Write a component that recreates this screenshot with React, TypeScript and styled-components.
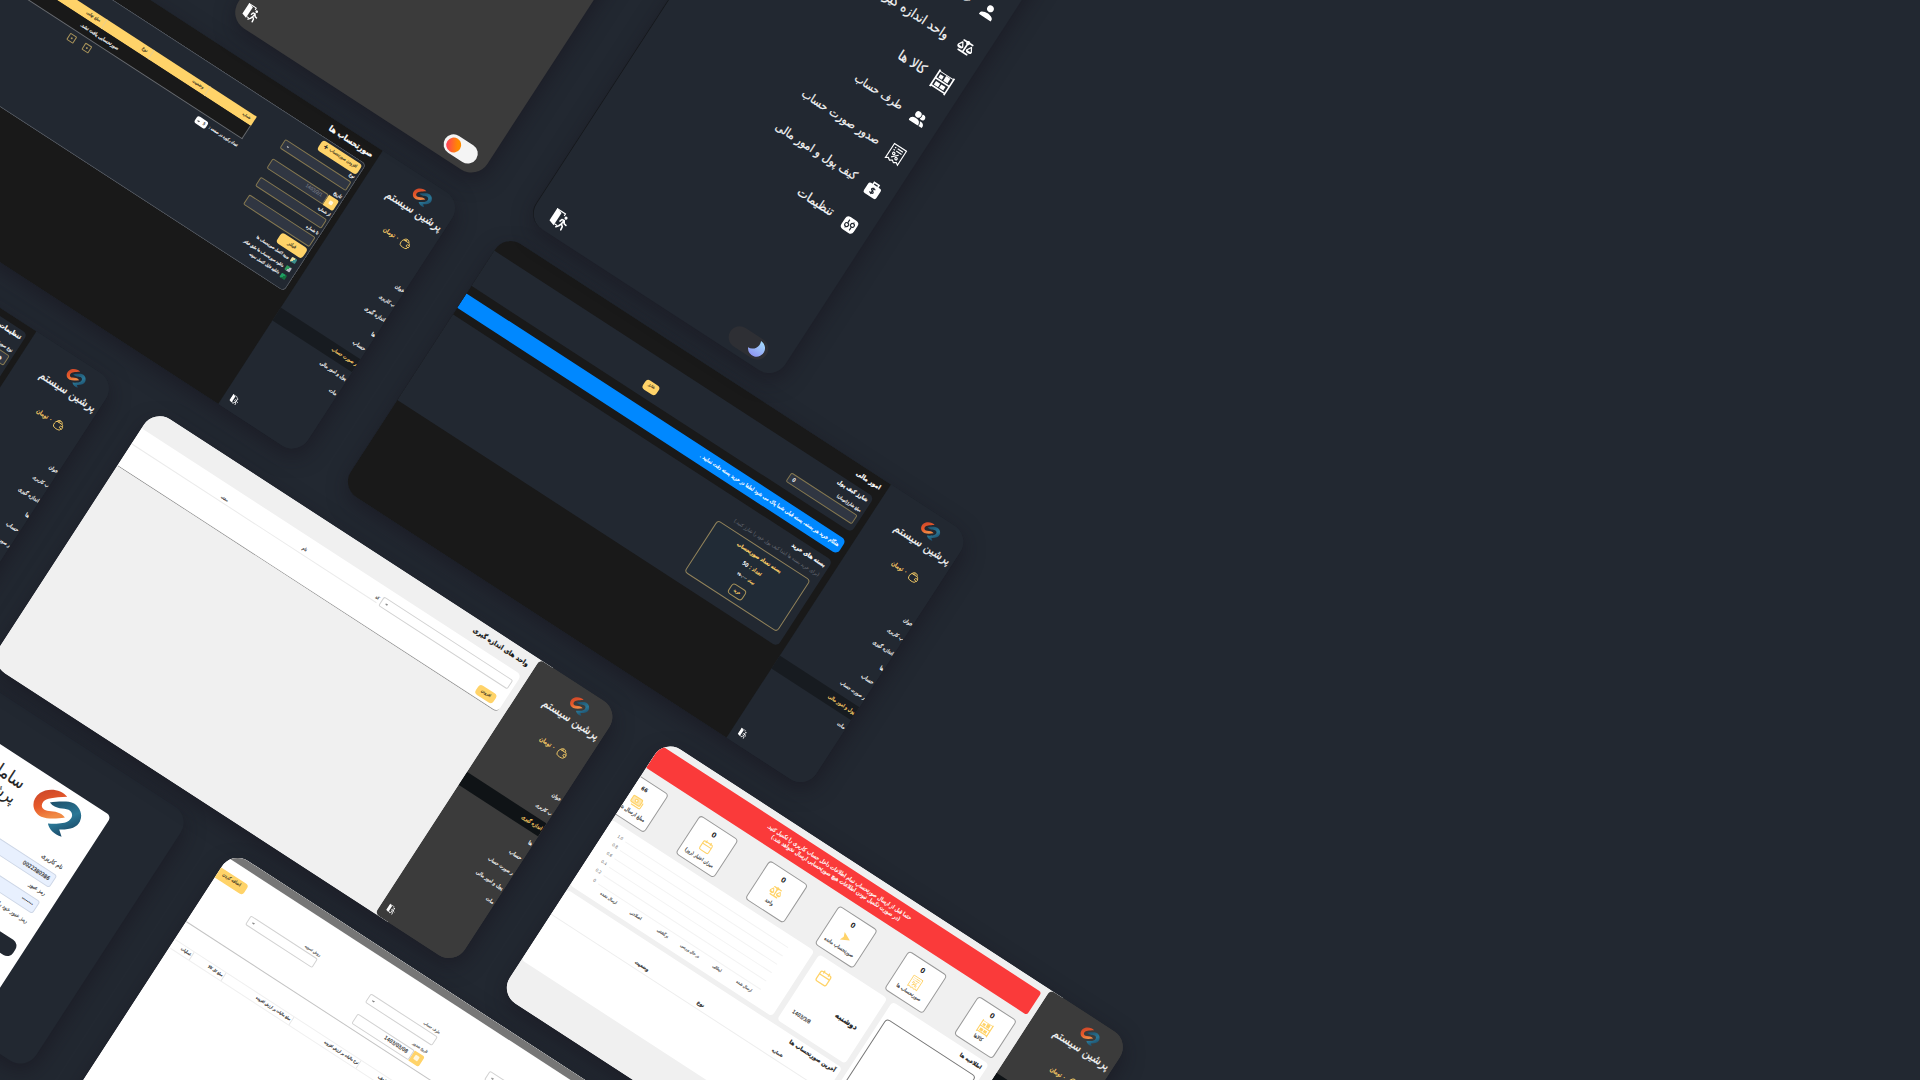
import React from "react";
import styled, { createGlobalStyle, css } from "styled-components";
import { FaScaleBalanced, FaUserGroup } from "react-icons/fa6";
import { MdPerson } from "react-icons/md";

const FACE = `"DejaVu Sans Condensed", "DejaVu Sans"`;
const FONT = `${FACE}, "Noto Sans", sans-serif`;
const c = {
  bg: "#222831",
  black: "#191919",
  gold: "#ffd369",
  line: "#a8935a",
  field: "#303642",
  grey: "#3b3b3b",
  light: "#f0f0f0",
};
const LIGHT_SHOT = `linear-gradient(to left, ${c.grey} 80px, ${c.light} 0)`;

const Global = createGlobalStyle`
  html, body { margin: 0; padding: 0; background: ${c.bg}; }
  * { box-sizing: border-box; }
`;

/* ---------- text fitted to a known width ---------- */
const pen = document.createElement("canvas").getContext("2d")!;
const fitSize = (text: string, width: number, weight: number) => {
  pen.font = `${weight} 100px ${FACE}`;
  return (width * 100) / pen.measureText(text).width;
};

const LabelText = styled.span<{ $c: string; $w: number; $s: number }>`
  color: ${(p) => p.$c};
  font-weight: ${(p) => p.$w};
  line-height: 1;
  white-space: nowrap;
  flex: none;
  direction: rtl;
  -webkit-text-stroke: ${(p) => p.$s}px currentColor;
`;

type LabelProps = { w: number; color?: string; bold?: boolean; stroke?: number; children: string };
const Label = ({ w, color = "#f4f4f4", bold, stroke = 0.2, children }: LabelProps) => {
  const weight = bold ? 700 : 400;
  return (
    <LabelText $c={color} $w={weight} $s={stroke} style={{ fontSize: fitSize(children, w, weight) }}>
      {children}
    </LabelText>
  );
};

/* ---------- canvas ---------- */
const Stage = styled.main`
  position: relative;
  width: 1920px;
  height: 1080px;
  overflow: hidden;
  background: ${c.bg};
  font-family: ${FONT};
`;
const Plane = styled.div`
  position: absolute;
  left: 0;
  top: 0;
  width: 0;
  height: 0;
  transform: rotate(33deg);
  transform-origin: 0 0;
`;
const Shot = styled.section<{ $x: number; $y: number; $w?: number; $h?: number; $bg?: string }>`
  position: absolute;
  left: ${(p) => p.$x}px;
  top: ${(p) => p.$y}px;
  width: ${(p) => p.$w ?? 555}px;
  height: ${(p) => p.$h ?? 302.5}px;
  background: ${(p) => p.$bg ?? c.bg};
  border-radius: 19px;
  overflow: hidden;
  display: flex;
  direction: rtl;
  box-shadow: 4px 6px 20px rgba(22, 18, 28, 0.5);
`;

/* ---------- building blocks ---------- */
const Row = styled.div<{ $h?: number; $mt?: number; $pr?: number; $gap?: number }>`
  display: flex;
  align-items: center;
  flex: none;
  height: ${(p) => (p.$h ? `${p.$h}px` : "auto")};
  margin-top: ${(p) => p.$mt ?? 0}px;
  padding-right: ${(p) => p.$pr ?? 0}px;
  gap: ${(p) => p.$gap ?? 0}px;
`;
const Body = styled.div<{ $bg: string; $pr?: number }>`
  flex: 1;
  min-width: 0;
  overflow: hidden;
  display: flex;
  flex-direction: column;
  background: ${(p) => p.$bg};
  padding-right: ${(p) => p.$pr ?? 7}px;
`;
const Panel = styled.div<{ $h: number; $mt?: number; $bg?: string; $line?: string; $pr?: number }>`
  flex: none;
  height: ${(p) => p.$h}px;
  margin-top: ${(p) => p.$mt ?? 0}px;
  background: ${(p) => p.$bg ?? c.bg};
  border-radius: 0 5px 5px 0;
  padding-right: ${(p) => p.$pr ?? 4}px;
  ${(p) => p.$line && css`border: 1px solid ${p.$line}; border-left: 0;`}
`;
const Button = styled.div<{ $w: number; $h: number; $outline?: boolean; $mt?: number; $mr?: number }>`
  flex: none;
  width: ${(p) => p.$w}px;
  height: ${(p) => p.$h}px;
  margin: ${(p) => p.$mt ?? 0}px ${(p) => p.$mr ?? 0}px 0 0;
  border-radius: 3.5px;
  display: flex;
  align-items: center;
  justify-content: center;
  gap: 2px;
  background: ${(p) => (p.$outline ? "transparent" : c.gold)};
  border: ${(p) => (p.$outline ? `1px solid ${c.line}` : "0")};
`;
const Input = styled.div<{ $w: number; $h: number; $light?: boolean }>`
  flex: none;
  width: ${(p) => p.$w}px;
  height: ${(p) => p.$h}px;
  border: 1px solid ${(p) => (p.$light ? "#d2d2d2" : "#857850")};
  border-radius: 2px;
  background: ${(p) => (p.$light ? "#ffffff" : c.field)};
  display: flex;
  align-items: center;
  justify-content: flex-end;
  padding-left: 4px;
`;
const StartInput = styled(Input)`
  justify-content: flex-start;
  padding-right: 4px;
`;
const DateTag = styled.div<{ $s: number }>`
  flex: none;
  width: ${(p) => p.$s}px;
  height: ${(p) => p.$s}px;
  border-radius: 0 2px 2px 0;
  background: ${c.gold};
  display: flex;
  align-items: center;
  justify-content: center;
  &::after {
    content: "";
    width: 4.5px;
    height: 4.5px;
    border-radius: 1px;
    background: #fff6dc;
  }
`;
const Chevron = ({ color }: { color: string }) => (
  <svg width="3" height="3" viewBox="0 0 8 8" fill="none" stroke={color} strokeWidth="2">
    <path d="M1 2.5 4 5.5 7 2.5" />
  </svg>
);

/* ---------- drawings ---------- */
const Mark = styled.svg`
  flex: none;
  transform: rotate(-33deg);
`;
const BrandMark = ({ size, id }: { size: number; id: string }) => (
  <Mark width={size} height={size} viewBox="95 265 150 150">
    <defs>
      <linearGradient id={`${id}o`} x1="0" y1="0" x2="0.3" y2="1">
        <stop offset="0" stopColor="#c8452a" />
        <stop offset="0.6" stopColor="#e85a2a" />
        <stop offset="1" stopColor="#f08a45" />
      </linearGradient>
      <linearGradient id={`${id}b`} x1="0" y1="0" x2="0.4" y2="1">
        <stop offset="0" stopColor="#1d4c66" />
        <stop offset="0.6" stopColor="#2a7796" />
        <stop offset="1" stopColor="#1b4a68" />
      </linearGradient>
    </defs>
    <path
      fill={`url(#${id}o)`}
      d="M200 290C182 267 142 262 118 279C90 299 93 336 122 350C142 358 170 356 193 352C182 337 162 334 145 333C124 331 119 317 128 305C138 294 158 292 200 290Z"
    />
    <path
      fill={`url(#${id}b)`}
      d="M148 307C165 304 190 303 205 305C236 310 249 342 238 364C229 382 208 389 176 388L183 410C160 402 146 388 142 370C165 372 192 371 205 362C219 351 217 336 204 329C190 322 166 330 148 307Z"
    />
  </Mark>
);
const ExitIcon = ({ size }: { size: number }) => (
  <svg width={size} height={size} viewBox="0 0 24 24">
    <path fill="#fff" d="M1 1 9 3.5V22.5L1 20Z" />
    <path fill="none" stroke="#fff" strokeWidth="1.5" d="M1 1.8H14V5M9 20.3H13" />
    <circle cx="17.5" cy="6" r="2" fill="#fff" />
    <path
      fill="none"
      stroke="#fff"
      strokeWidth="2.1"
      strokeLinejoin="round"
      strokeLinecap="round"
      d="M13 13.5 14 10.5 17.3 10 16.5 15.5 19.5 18 20 22.5M16.3 16 15 19.5 12.5 22.5M18 11 19.5 13.5 22.5 14"
    />
  </svg>
);
const ShelfIcon = ({ size, color = "#fff" }: { size: number; color?: string }) => (
  <svg width={size} height={size} viewBox="0 0 24 24" fill={color}>
    <path d="M1 0h2v24H1zM21 0h2v24h-2zM2 10.5h20v2H2zM2 20.5h20v2H2zM5 5h5v4.500H5zM12 3h6v6.500H12zM5 14.500h6v5H5zM12.500 14.500h6v5h-6zM2 1.500h20v1H2z" />
  </svg>
);
const InvoiceIcon = ({ size, color = "#fff" }: { size: number; color?: string }) => (
  <svg width={size} height={size} viewBox="0 0 24 24" fill="none" stroke={color} strokeWidth="1.5">
    <path d="M3 1.5H21V22.5L18 20.5 15 22.5 12 20.5 9 22.5 6 20.5 3 22.5Z" />
    <path d="M6 5H8M10 5H18M6 8.3H8M10 8.3H18M15.5 11 8.5 18" />
    <circle cx="9" cy="12.5" r="1.5" />
    <circle cx="15" cy="16.5" r="1.5" />
  </svg>
);
const BagIcon = ({ size }: { size: number }) => (
  <svg width={size} height={size} viewBox="0 0 24 24">
    <path fill="none" stroke="#fff" strokeWidth="2.2" d="M8 7V2.5H16V7" />
    <rect x="1.5" y="5.5" width="21" height="17" rx="3" fill="#fff" />
    <path
      fill="none"
      stroke={c.bg}
      strokeWidth="1.7"
      d="M14.8 11.3C14 10 9.6 10 9.6 12.2 9.6 14.5 14.6 13.6 14.6 15.9 14.6 18.2 10 18.2 9.2 16.6M12.1 9V19.2"
    />
  </svg>
);
const TuneIcon = ({ size }: { size: number }) => (
  <svg width={size} height={size} viewBox="0 0 24 24">
    <rect x="1" y="1" width="22" height="22" rx="6" fill="#fff" />
    <g fill="none" stroke={c.bg} strokeWidth="1.7">
      <circle cx="8" cy="13.8" r="2.9" />
      <circle cx="16" cy="10.2" r="2.9" />
      <path d="M8 5V10.8M8 16.8V19M16 5V7.2M16 13.2V19" />
    </g>
  </svg>
);
const PurseIcon = () => (
  <svg width="11" height="11" viewBox="0 0 24 24" fill="none" stroke={c.gold} strokeWidth="1.8">
    <path d="M5 7C2 9 1.5 17 4 20C6.500 22.500 17 22.500 19.500 20.500C21 19 21.500 17 21.500 16M21.500 12C21.500 9 20 7 17.500 7H5C6 4 9 2 12 2C15 2 17 4 18 7" />
    <path d="M23 11.500H18.500C15.500 11.500 15.500 16.500 18.500 16.500H23ZM8 7 12 3.500" />
  </svg>
);
const CalendarIcon = ({ size }: { size: number }) => (
  <svg width={size} height={size} viewBox="0 0 24 24" fill="none" stroke={c.gold} strokeWidth="2">
    <rect x="2.500" y="4" width="19" height="18" rx="3" />
    <path d="M2.500 10H21.500M7.500 1V6.500M16.500 1V6.500" />
  </svg>
);
const CashIcon = ({ size }: { size: number }) => (
  <svg width={size} height={size} viewBox="0 0 24 24" fill="none" stroke={c.gold} strokeWidth="2">
    <rect x="1.500" y="4" width="18" height="12" rx="2" fill="#ffe7ae" />
    <circle cx="10.500" cy="10" r="2.500" fill="#fff" />
    <path d="M5 19.500H20C22 19.500 22.500 18.500 22.500 17V8" />
  </svg>
);
const SendIcon = ({ size }: { size: number }) => (
  <svg width={size} height={size} viewBox="0 0 24 24" fill={c.gold}>
    <path d="M4 3 22 12 4 21 7.500 12Z" />
  </svg>
);

/* ---------- sidebar ---------- */
const Side = styled.aside<{ $bg: string }>`
  flex: none;
  width: 95px;
  background: ${(p) => p.$bg};
  border-radius: 5px 0 0 5px;
  direction: ltr;
  display: flex;
  flex-direction: column;
  overflow: hidden;
`;
const Brand = styled.div`
  width: 66px;
  height: 35px;
  margin: 8px 0 0 26px;
  display: flex;
  flex-direction: column;
  align-items: center;
  gap: 0;
`;
const Wallet = styled.div`
  display: flex;
  align-items: center;
  gap: 3px;
  height: 12px;
  margin: 17px 0 26.200px 43.500px;
`;
const MenuItem = styled.div<{ $x: number; $on: boolean; $onBg: string }>`
  height: 17.600px;
  flex: none;
  display: flex;
  align-items: center;
  padding-left: ${(p) => p.$x}px;
  background: linear-gradient(${(p) => (p.$on ? p.$onBg : "transparent")} 0 0) center / 100% 15.500px no-repeat;
`;
const SideExit = styled.div`
  margin: 47px 0 0 7px;
  height: 9px;
  line-height: 0;
`;
const MENU_TAILS: [string, number, number][] = [
  ["خوان", 84.5, 10],
  ["ب کاربری", 76.5, 18],
  ["اندازه گیری", 71, 23.5],
  ["ها", 90.5, 4],
  ["حساب", 79.5, 14],
  ["ر صورت حساب", 65.5, 29],
  ["پول و امور مالی", 63, 31],
  ["مات", 85.5, 8.5],
];

const Sidebar = ({ active, dark, id }: { active: number; dark?: boolean; id: string }) => (
  <Side $bg={dark ? c.bg : c.grey}>
    <Brand>
      <BrandMark size={20} id={id} />
      <Label w={65}>پرشین سیستم</Label>
    </Brand>
    <Wallet>
      <Label w={18} color={c.gold}>۰ تومان</Label>
      <PurseIcon />
    </Wallet>
    {MENU_TAILS.map(([name, x, w], i) => (
      <MenuItem key={name} $x={x} $on={i === active} $onBg={dark ? "#171b20" : "#0f1316"}>
        <Label w={w} color={i === active ? c.gold : "#f4f4f4"}>{name}</Label>
      </MenuItem>
    ))}
    <SideExit>
      <ExitIcon size={9} />
    </SideExit>
  </Side>
);

/* ---------- invoices ---------- */
const Split = styled.div`
  display: flex;
  align-items: flex-start;
`;
const Filters = styled.div`
  width: 79px;
  flex: none;
  display: flex;
  flex-direction: column;
  align-items: flex-start;
`;
const Results = styled.div`
  width: 350px;
  flex: none;
  margin: 19.500px 36.500px 0 0;
`;
const HeadRow = styled.div`
  display: flex;
  height: 11px;
  background: ${c.gold};
`;
const HeadCell = styled.div<{ $w: number }>`
  width: ${(p) => p.$w}px;
  display: flex;
  align-items: center;
  padding-right: 4px;
  border-left: 1px solid #e8cf8e;
`;
const EmptyRow = styled.div`
  height: 15.500px;
  display: flex;
  align-items: center;
  justify-content: center;
  background: ${c.black};
  border: 1px solid #666a70;
  border-top: 0;
`;
const PageSelect = styled.div`
  width: 12.500px;
  height: 8px;
  margin-right: 3px;
  border-radius: 2.500px;
  background: #fff;
  display: flex;
  align-items: center;
  justify-content: space-around;
`;
const Pager = styled.div`
  display: flex;
  gap: 10px;
  margin-right: 126px;
`;
const PagerBox = styled.div`
  width: 8px;
  height: 8px;
  border: 1px solid ${c.line};
  border-radius: 1px;
  display: flex;
  align-items: center;
  justify-content: center;
  &::after {
    content: "";
    width: 2.500px;
    height: 2.500px;
    border-radius: 50%;
    background: ${c.line};
  }
`;
const Sheet = styled.i<{ $a: string; $b: string }>`
  width: 6px;
  height: 5.500px;
  border-radius: 1px;
  background: linear-gradient(120deg, ${(p) => p.$a} 50%, ${(p) => p.$b} 50%);
`;

const InvoicesShot = () => (
  <Shot $x={-57} $y={-82.5}>
    <Sidebar active={5} dark id="a" />
    <Body $bg={c.black} $pr={6}>
      <Row $h={20} $pr={-1}>
        <Label w={51} bold color="#fff">صورتحساب ها</Label>
      </Row>
      <Panel $h={152} $line="#565b63" $pr={2}>
        <Split>
          <Filters>
            <Button $w={47} $h={12} $mt={2} $mr={0}>
              <Label w={32} color="#4d4328">افزودن صورتحساب</Label>
              <Label w={5} bold color="#222">+</Label>
            </Button>
            <Row $h={8}><Label w={6}>نوع</Label></Row>
            <Row><Input $w={79} $h={11.5}><Chevron color="#ccc" /></Input></Row>
            <Row $h={8} $mt={3.5}><Label w={9}>تاریخ</Label></Row>
            <Row>
              <DateTag $s={12.5} />
              <StartInput $w={66.5} $h={12}><Label w={19} color="#6b6f7a">1403/2/1</Label></StartInput>
            </Row>
            <Row $h={8} $mt={1.5}><Label w={14}>از شماره</Label></Row>
            <Row><Input $w={79} $h={11.5} /></Row>
            <Row $h={8} $mt={2}><Label w={14}>تا شماره</Label></Row>
            <Row><Input $w={79} $h={11.5} /></Row>
            <Button $w={31} $h={12} $mt={2.5}>
              <Label w={9} color="#4d4328">فیلتر</Label>
            </Button>
            <Row $h={9} $mt={1} $gap={2.5} $pr={3}>
              <Sheet $a="#e9dfa0" $b="#3c8f8a" />
              <Label w={38}>ورود اکسل صورتحساب ها</Label>
            </Row>
            <Row $h={9} $mt={1} $gap={2.5} $pr={3}>
              <Sheet $a="#2f9a5c" $b="#b9b9c4" />
              <Label w={47}>دانلود صورتحساب ها طبق فیلتر</Label>
            </Row>
            <Row $h={9} $gap={2.5} $pr={3}>
              <Sheet $a="#1f9e63" $b="#14713f" />
              <Label w={35}>دانلود فایل اکسل نمونه</Label>
            </Row>
          </Filters>
          <Results>
            <HeadRow>
              <HeadCell $w={56}><Label w={9} color="#4d4328">شماره</Label></HeadCell>
              <HeadCell $w={67}><Label w={13} color="#4d4328">وضعیت</Label></HeadCell>
              <HeadCell $w={56}><Label w={6} color="#4d4328">نوع</Label></HeadCell>
              <HeadCell $w={171}><Label w={16} color="#4d4328">مبلغ نهایی</Label></HeadCell>
            </HeadRow>
            <EmptyRow><Label w={45}>صورتحسابی یافت نشد.</Label></EmptyRow>
            <Row $h={17}>
              <Label w={34}>تعداد رکورد در صفحه :</Label>
              <PageSelect><Label w={2.2} color="#333">5</Label><Chevron color="#333" /></PageSelect>
              <Pager><PagerBox /><PagerBox /></Pager>
            </Row>
          </Results>
        </Split>
      </Panel>
    </Body>
  </Shot>
);

/* ---------- finance ---------- */
const Notice = styled.div`
  flex: none;
  height: 17px;
  margin-top: 9.500px;
  background: #0088ff;
  border-radius: 0 5px 5px 0;
  display: flex;
  align-items: center;
  padding-right: 4px;
`;
const PackBox = styled.div`
  width: 111px;
  height: 61.500px;
  margin: 5px 4px 0 0;
  border: 1px solid #91825a;
  border-radius: 4px;
  background: #212b36;
  display: flex;
  flex-direction: column;
  align-items: center;
`;
const FinanceShot = () => (
  <Shot $x={551} $y={-79.5}>
    <Sidebar active={6} dark id="b" />
    <Body $bg={c.black}>
      <Row $h={20}>
        <Label w={28} bold color="#fff">امور مالی</Label>
      </Row>
      <Panel $h={42}>
        <Row $h={15}><Label w={35} bold color="#fff">شارژ کیف پول</Label></Row>
        <Row $h={8} $mt={0.5}><Label w={28}>مبلغ شارژ(تومان)</Label></Row>
        <Row $mt={0.5} $gap={156}>
          <Input $w={79} $h={11.5}><Label w={3}>0</Label></Input>
          <Button $w={16} $h={10.5}><Label w={7} color="#4d4328">شارژ</Label></Button>
        </Row>
      </Panel>
      <Notice>
        <Label w={165} color="#fff">هنگام خرید هر بسته، بسته قبلی شما پاک می شود لطفا در خرید بسته دقت نمایید .</Label>
      </Notice>
      <Panel $h={102} $mt={8}>
        <Row $h={17}><Label w={39} bold color="#fff">بسته های خرید</Label></Row>
        <Row $h={6}><Label w={101} color="#6d717a" stroke={0}>(برای خرید بسته ها ابتدا کیف پول خود را شارژ کنید.)</Label></Row>
        <PackBox>
          <Row $h={10} $mt={4}><Label w={52} bold color={c.gold}>بسته تعداد صورتحساب</Label></Row>
          <Row $h={10} $mt={3} $gap={2}>
            <Label w={14} color={c.gold}>تعداد :</Label>
            <Label w={6} color="#fff">50</Label>
          </Row>
          <Row $h={8} $mt={3} $gap={1.5}>
            <Label w={7} color={c.gold}>تومان</Label>
            <Label w={11}>۲۵۰,۰۰۰</Label>
          </Row>
          <Button $w={17} $h={12} $mt={5} $outline><Label w={7} color={c.gold}>خرید</Label></Button>
        </PackBox>
      </Panel>
    </Body>
  </Shot>
);

/* ---------- units ---------- */
const UnitForm = styled.div`
  width: 161px;
  flex: none;
  padding: 9.500px 4.500px 0 0;
`;
const UnitTable = styled.div`
  flex: 1;
  height: 19.500px;
  display: flex;
  align-items: flex-end;
  padding-bottom: 2px;
  border-bottom: 1px solid #ebebeb;
`;
const UnitCell = styled.div<{ $w: number }>`
  width: ${(p) => p.$w}px;
  flex: none;
  display: flex;
`;
const UnitPanel = styled(Panel)`
  display: flex;
  align-items: flex-start;
  border-bottom: 1px solid #9a9a9a;
`;
const UnitsShot = () => (
  <Shot $x={351.5} $y={259} $bg={LIGHT_SHOT}>
    <Sidebar active={2} id="c" />
    <Body $bg={c.light} $pr={6.5}>
      <Row $h={22.5}><Label w={65} bold color="#111">واحد های اندازه گیری</Label></Row>
      <UnitPanel $h={45.5} $bg="#fff" $pr={0}>
        <UnitForm>
          <Input $w={154} $h={11} $light><Chevron color="#555" /></Input>
          <Button $w={20.5} $h={10.5} $mt={10} $mr={5}><Label w={11} color="#4d4328">افزودن</Label></Button>
        </UnitForm>
        <UnitTable>
          <UnitCell $w={87}><Label w={4} color="#333">کد</Label></UnitCell>
          <UnitCell $w={93}><Label w={5} color="#333">نام</Label></UnitCell>
          <UnitCell $w={60}><Label w={8} color="#333">عملیات</Label></UnitCell>
        </UnitTable>
      </UnitPanel>
    </Body>
  </Shot>
);

/* ---------- dashboard ---------- */
const Alert = styled.div`
  flex: none;
  height: 26.500px;
  margin-top: 7px;
  padding-right: 15px;
  border-radius: 0 3px 3px 0;
  background: #fa3a3a;
  display: flex;
  flex-direction: column;
  align-items: center;
  justify-content: center;
  gap: 2px;
`;
const Stats = styled.div`
  display: flex;
  flex: none;
  gap: 37px;
  margin: 10.500px 5px 6px 0;
`;
const Stat = styled.div`
  flex: none;
  width: 46px;
  height: 46px;
  background: #fff;
  border: 1px solid #999;
  border-radius: 4px;
  display: flex;
  flex-direction: column;
  align-items: center;
  padding-top: 5px;
`;
const StatIcon = styled.div`
  height: 15px;
  margin: 2px 0 1px;
  display: flex;
  align-items: center;
  color: ${c.gold};
  font-size: 13px;
`;
const Main = styled.div`
  display: grid;
  grid-template-columns: 115px 1fr;
  gap: 6px;
  padding-right: 5px;
  flex: none;
`;
const Stack = styled.div`
  display: flex;
  flex-direction: column;
  gap: 6px;
`;
const Tiles = styled.div`
  display: grid;
  grid-template-columns: 81px 1fr;
  gap: 6px;
  height: 77px;
`;
const Tile = styled.div<{ $h?: number; $p?: string }>`
  background: #fff;
  border-radius: 4px;
  height: ${(p) => (p.$h ? `${p.$h}px` : "auto")};
  padding: ${(p) => p.$p ?? "3px 4px"};
`;
const NewsBox = styled.div`
  height: 140px;
  margin-top: 4px;
  border: 1px solid #777;
  border-radius: 4px;
`;
const DateTile = styled(Tile)`
  display: grid;
  grid-template-rows: 21px 27px 16px;
  align-items: center;
  padding: 7px 9px;
  direction: rtl;
`;
const End = styled.div`
  display: flex;
  justify-content: flex-end;
`;
const Chart = styled(Tile)`
  direction: ltr;
  padding: 6px 0 0 13px;
`;
const Tick = styled.div`
  height: 10px;
  width: 204px;
  display: flex;
  align-items: center;
  &::after {
    content: "";
    flex: 1;
    margin-left: 3px;
    border-top: 1px solid #f3f3f3;
  }
`;
const TickNum = styled.div`
  width: 7px;
  display: flex;
  justify-content: flex-end;
`;
const Axis = styled.div`
  display: grid;
  grid-template-columns: repeat(6, 32.300px);
  justify-items: center;
  margin: 0 0 0 11px;
`;
const LastHead = styled.div`
  display: flex;
  height: 12px;
  align-items: center;
  border-bottom: 1px solid #eee;
  margin: 7px -4px 0;
  padding-right: 56px;
`;
const STATS: [string, string, number, React.ReactNode][] = [
  ["0", "کالاها", 10, <ShelfIcon size={14} color={c.gold} />],
  ["0", "صورتحساب ها", 28, <InvoiceIcon size={14} color={c.gold} />],
  ["0", "صورتحساب مانده", 34, <SendIcon size={12} />],
  ["0", "واحد", 9, <FaScaleBalanced />],
  ["0", "میزان اعتبار (روز)", 33, <CalendarIcon size={13} />],
  ["66", "مبلغ ارسال شده", 34, <CashIcon size={14} />],
];
const DashboardShot = () => (
  <Shot $x={959.5} $y={258} $bg={LIGHT_SHOT}>
    <Sidebar active={0} id="d" />
    <Body $bg={c.light} $pr={6}>
      <Alert>
        <Label w={171} color="#fff">حتما قبل از ارسال صورتحساب تمام اطلاعات داخل حساب کاربری را تکمیل کنید.</Label>
        <Label w={153} color="#fff">(در صورت تکمیل نبودن اطلاعات هیچ صورتحسابی ارسال نخواهد شد.)</Label>
      </Alert>
      <Stats>
        {STATS.map(([n, name, w, icon]) => (
          <Stat key={name}>
            <Row $h={8}><Label w={n === "0" ? 4.5 : 7} bold color="#222" stroke={0}>{n}</Label></Row>
            <StatIcon>{icon}</StatIcon>
            <Row $h={8}><Label w={w} color="#444">{name}</Label></Row>
          </Stat>
        ))}
      </Stats>
      <Main>
        <Tile $h={167}>
          <Row $h={10}><Label w={25} bold color="#222">اطلاعیه ها</Label></Row>
          <NewsBox />
        </Tile>
        <Stack>
          <Tiles>
            <DateTile>
              <End><CalendarIcon size={15} /></End>
              <Row><Label w={25} bold color="#222">دوشنبه</Label></Row>
              <End><Label w={21} color="#444">1403/3/8</Label></End>
            </DateTile>
            <Chart>
              {["1.0", "0.8", "0.6", "0.4", "0.2", "0"].map((n) => (
                <Tick key={n}><TickNum><Label w={n === "0" ? 2.5 : 6} color="#666" stroke={0}>{n}</Label></TickNum></Tick>
              ))}
              <Axis>
                <Label w={19} color="#555">ارسال نشده</Label>
                <Label w={13} color="#555">اصلاحی</Label>
                <Label w={13} color="#555">برگشتی</Label>
                <Label w={22} color="#555">در حال بررسی</Label>
                <Label w={10} color="#555">ابطالی</Label>
                <Label w={18} color="#555">ارسال شده</Label>
              </Axis>
            </Chart>
          </Tiles>
          <Tile $h={84}>
            <Row $h={8}><Label w={54} bold color="#222">آخرین صورتحساب ها</Label></Row>
            <LastHead>
              <UnitCell $w={93}><Label w={12} bold color="#333">شماره</Label></UnitCell>
              <UnitCell $w={66}><Label w={8} bold color="#333">نوع</Label></UnitCell>
              <UnitCell $w={40}><Label w={16} bold color="#333">وضعیت</Label></UnitCell>
            </LastHead>
          </Tile>
        </Stack>
      </Main>
    </Body>
  </Shot>
);

/* ---------- settings ---------- */
const SettingsShot = () => (
  <Shot $x={-249} $y={258}>
    <Sidebar active={7} dark id="e" />
    <Body $bg={c.black} $pr={6.5}>
      <Panel $h={240} $mt={7} $pr={3}>
        <Row $h={15}><Label w={25} bold color="#fff">تنظیمات</Label></Row>
        <Row $h={8} $mt={4}><Label w={28}>نوع صورتحساب</Label></Row>
        <Row $mt={1}><StartInput $w={79} $h={12}><Label w={9}>همه</Label></StartInput></Row>
      </Panel>
    </Body>
  </Shot>
);

/* ---------- login ---------- */
const LoginCard = styled.div`
  width: 420px;
  height: 222px;
  margin: 43px 67.500px 0 0;
  background: #fff;
  border-radius: 5px;
  padding-top: 2px;
`;
const LoginHead = styled.div`
  display: flex;
  align-items: center;
  height: 50px;
  padding-right: 22px;
  gap: 18px;
`;
const LoginTitle = styled.div`
  display: flex;
  flex-direction: column;
  gap: 1px;
  padding-top: 6px;
`;
const LoginInput = styled.div`
  width: 395px;
  height: 15.500px;
  margin-right: 12.500px;
  padding-right: 4px;
  border: 1px solid #cdd6e6;
  border-radius: 3px;
  background: #e8f0fe;
  display: flex;
  align-items: center;
`;
const LoginButton = styled.div`
  width: 405px;
  height: 17.500px;
  margin: 17px 7.500px 0 0;
  border-radius: 7px;
  background: ${c.bg};
`;
const LoginShot = () => (
  <Shot $x={50} $y={581}>
    <LoginCard>
      <LoginHead>
        <BrandMark size={50} id="f" />
        <LoginTitle>
          <Label w={92} color="#222">سامانه مودیان</Label>
          <Label w={86} color="#222">پرشین سیستم</Label>
        </LoginTitle>
      </LoginHead>
      <Row $h={11} $mt={13} $pr={12.5}><Label w={24} color="#444">نام کاربری</Label></Row>
      <Row $mt={2.5}><LoginInput><Label w={31} color="#333">0022380386</Label></LoginInput></Row>
      <Row $h={11} $mt={2} $pr={12.5}><Label w={19} color="#444">رمز عبور</Label></Row>
      <Row $mt={2.5}><LoginInput><Label w={13} color="#222">••••••••</Label></LoginInput></Row>
      <Row $h={11} $mt={4} $pr={12.5}><Label w={76} color="#555">رمز عبور خود را فراموش کرده اید؟</Label></Row>
      <LoginButton />
    </LoginCard>
  </Shot>
);

/* ---------- invoice form ---------- */
const FormBody = styled.div`
  flex: 1;
  background: #fff;
  border-top: 8px solid #777;
  display: flex;
  flex-direction: column;
  direction: ltr;
`;
const Fields = styled.div`
  display: grid;
  grid-template-columns: repeat(3, 80px);
  column-gap: 62.500px;
  height: 48.500px;
  margin: 4px 0 0 51.500px;
`;
const FieldCol = styled.div`
  direction: rtl;
`;
const Lines = styled.div`
  display: flex;
  height: 11.500px;
  margin-top: 19.500px;
  border-top: 1px solid #f0f0f0;
  border-bottom: 1px solid #f0f0f0;
`;
const LineCell = styled.div<{ $w: number }>`
  width: ${(p) => p.$w}px;
  flex: none;
  direction: rtl;
  display: flex;
  align-items: center;
  padding-right: 0.500px;
  border-right: 1px solid #e6e6e6;
`;
const Rule = styled.hr`
  width: 100%;
  margin: 0;
  border: 0;
  border-top: 1px solid #c4c4c4;
`;
const ClipButton = styled(Button)`
  margin: 12.500px 0 0 -9px;
  padding-left: 8px;
`;
const FormShot = () => (
  <Shot $x={657.5} $y={586.5} $bg="#fff">
    <FormBody>
      <ClipButton $w={42} $h={11.5}><Label w={21} color="#4d4328">اضافه کردن</Label></ClipButton>
      <Fields>
        <FieldCol>
          <Row $h={8}><Label w={18} color="#666">روش تسویه</Label></Row>
          <Input $w={80} $h={11} $light><Chevron color="#555" /></Input>
        </FieldCol>
        <FieldCol>
          <Row $h={8}><Label w={19} color="#666">طرف حساب</Label></Row>
          <Input $w={80} $h={11} $light><Chevron color="#555" /></Input>
          <Row $h={8} $mt={5}><Label w={17} color="#666">تاریخ صدور</Label></Row>
          <Row>
            <DateTag $s={12} />
            <StartInput $w={68} $h={12} $light><Label w={27} color="#444">1403/03/08</Label></StartInput>
          </Row>
        </FieldCol>
        <FieldCol>
          <Row $h={8}><Label w={18} color="#666">نوع الگو</Label></Row>
          <Input $w={80} $h={11} $light><Chevron color="#555" /></Input>
        </FieldCol>
      </Fields>
      <Rule />
      <Lines>
        <LineCell $w={24.5}><Label w={12} color="#333">عملیات</Label></LineCell>
        <LineCell $w={37.5}><Label w={17} color="#333">مبلغ کل کالا</Label></LineCell>
        <LineCell $w={81}><Label w={41} color="#333">مبلغ مالیات بر ارزش افزوده</Label></LineCell>
        <LineCell $w={80.5}><Label w={40} color="#333">نرخ مالیات بر ارزش افزوده</Label></LineCell>
        <LineCell $w={48}><Label w={24} color="#333">مبلغ تخفیف</Label></LineCell>
      </Lines>
    </FormBody>
  </Shot>
);

/* ---------- phone menus ---------- */
const Phone = styled.div`
  flex: 1;
  display: flex;
  flex-direction: column;
  justify-content: flex-end;
`;
const PhoneItem = styled.div`
  height: 42.400px;
  flex: none;
  display: flex;
  align-items: center;
  padding-right: 11px;
`;
const PhoneIcon = styled.div`
  width: 21px;
  margin-left: 10px;
  display: flex;
  justify-content: center;
  color: #fff;
  font-size: 17px;
`;
const PhoneFoot = styled.div<{ $mt: number; $l: number; $r: number }>`
  height: 34px;
  flex: none;
  margin-top: ${(p) => p.$mt}px;
  padding: 0 ${(p) => p.$r}px 0 ${(p) => p.$l}px;
  display: flex;
  flex-direction: row-reverse;
  align-items: center;
  justify-content: space-between;
`;
const Toggle = styled.div<{ $w: number; $h: number; $bg: string; $end?: boolean }>`
  width: ${(p) => p.$w}px;
  height: ${(p) => p.$h}px;
  border-radius: 99px;
  background: ${(p) => p.$bg};
  display: flex;
  align-items: center;
  justify-content: ${(p) => (p.$end ? "flex-start" : "flex-end")};
  padding: 0 3px;
`;
const Sun = styled.div`
  width: 15px;
  height: 15px;
  border-radius: 50%;
  background: linear-gradient(60deg, #ff2d6e, #ff8a00 70%);
`;
const Moon = () => (
  <svg width="18" height="18" viewBox="0 0 18 18">
    <defs>
      <linearGradient id="moon" x1="0.6" y1="0" x2="0.6" y2="1">
        <stop offset="0" stopColor="#a3dafc" />
        <stop offset="1" stopColor="#8f96f2" />
      </linearGradient>
    </defs>
    <path fill="url(#moon)" d="M9 .500A8.500 8.500 0 1 1 1.500 12.800A8.500 8.500 0 0 0 9 .500Z" />
  </svg>
);
const MENU: [string, number, React.ReactNode][] = [
  ["حساب کاربری", 68, <MdPerson size={21} />],
  ["واحد اندازه گیری", 84, <FaScaleBalanced />],
  ["کالا ها", 31, <ShelfIcon size={20} />],
  ["طرف حساب", 55, <FaUserGroup size={16} />],
  ["صدور صورت حساب", 91, <InvoiceIcon size={19} />],
  ["کیف پول و امور مالی", 95, <BagIcon size={17} />],
  ["تنظیمات", 41, <TuneIcon size={16} />],
];
const LightPhone = () => (
  <Shot $x={200.5} $y={-709} $w={297} $h={600} $bg={c.grey}>
    <Phone>
      <PhoneFoot $mt={0} $l={9} $r={12}>
        <ExitIcon size={16} />
        <Toggle $w={36.5} $h={20.5} $bg="#f4f4f4"><Sun /></Toggle>
      </PhoneFoot>
    </Phone>
  </Shot>
);
const DarkPhoneShot = styled(Shot)`
  border-left: 1px solid #16181c;
`;
const DarkPhone = () => (
  <DarkPhoneShot $x={560} $y={-703.5} $w={296.5} $h={600}>
    <Phone>
      {MENU.map(([name, w, icon]) => (
        <PhoneItem key={name}>
          <PhoneIcon>{icon}</PhoneIcon>
          <Label w={w}>{name}</Label>
        </PhoneItem>
      ))}
      <PhoneFoot $mt={115.5} $l={19} $r={20.5}>
        <ExitIcon size={18.5} />
        <Toggle $w={43} $h={22} $bg="#2e2f34" $end><Moon /></Toggle>
      </PhoneFoot>
    </Phone>
  </DarkPhoneShot>
);

export default function App() {
  return (
    <Stage>
      <Global />
      <Plane>
        <LoginShot />
        <FormShot />
        <SettingsShot />
        <UnitsShot />
        <DashboardShot />
        <InvoicesShot />
        <FinanceShot />
        <LightPhone />
        <DarkPhone />
      </Plane>
    </Stage>
  );
}
